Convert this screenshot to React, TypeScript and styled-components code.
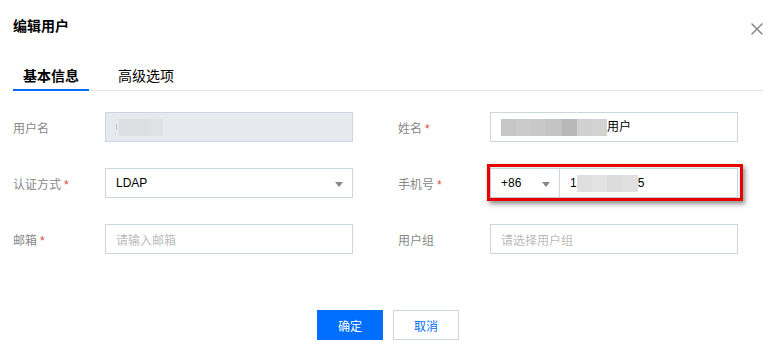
import styled, { createGlobalStyle } from 'styled-components';

const GlobalStyle = createGlobalStyle`
  html, body {
    margin: 0;
    padding: 0;
    background: #fff;
  }
  body {
    font-family: 'Liberation Sans', Arial, 'Noto Sans CJK SC', sans-serif;
    color: #000;
  }
`;

const BLUE = '#006eff';

export default function App() {
  return (
    <>
      <GlobalStyle />
      <Dialog>
        <Header>
          <Title>编辑用户</Title>
          <Close aria-label="关闭">
            <svg width="14" height="14" viewBox="0 0 14 14">
              <path d="M1.5 1.5 L12.5 12.5 M12.5 1.5 L1.5 12.5" stroke="#888" strokeWidth="1.5" />
            </svg>
          </Close>
        </Header>

        <TabBar>
          <Tab active>基本信息</Tab>
          <Tab>高级选项</Tab>
        </TabBar>

        <Form>
          <Field>
            <Label>用户名</Label>
            <Input disabled>
              <Tick />
              <Redacted shades={['#dcdee2', '#dcdee2', '#dfe1e5']} width={44} />
            </Input>
          </Field>
          <Field>
            <Label required>姓名</Label>
            <Input>
              <Redacted
                shades={['#c6c6c6', '#cbcbcb', '#c8c8c8', '#c3c3c3', '#b8b8b8', '#d0d0d0', '#d3d3d3']}
                width={106}
              />
              <Value>用户</Value>
            </Input>
          </Field>

          <Field>
            <Label required>认证方式</Label>
            <Input>
              <Value>LDAP</Value>
              <Caret />
            </Input>
          </Field>
          <Field>
            <Label required>手机号</Label>
            <Marked>
              <Input>
                <Prefix>
                  <Value>+86</Value>
                  <Caret />
                </Prefix>
                <Number>
                  <Value>1</Value>
                  <Redacted shades={['#dedede', '#e3e3e3', '#dcdcdc', '#e0e0e0']} width={61} />
                  <Value>5</Value>
                </Number>
              </Input>
              <Highlight />
            </Marked>
          </Field>

          <Field>
            <Label required>邮箱</Label>
            <Input>
              <Placeholder>请输入邮箱</Placeholder>
            </Input>
          </Field>
          <Field>
            <Label>用户组</Label>
            <Input>
              <Placeholder>请选择用户组</Placeholder>
            </Input>
          </Field>
        </Form>

        <Footer>
          <Button primary>确定</Button>
          <Button>取消</Button>
        </Footer>
      </Dialog>
    </>
  );
}

function Redacted({ shades, width }: { shades: string[]; width: number }) {
  return (
    <Blur style={{ width }}>
      {shades.map((c, i) => (
        <span key={i} style={{ background: c }} />
      ))}
    </Blur>
  );
}

const Dialog = styled.div`
  width: 776px;
  height: 358px;
  box-sizing: border-box;
  padding: 0 13px;
  font-family: 'Liberation Sans', Arial, 'Noto Sans CJK SC', sans-serif;
`;

const Header = styled.div`
  display: flex;
  align-items: center;
  justify-content: space-between;
  padding: 16px 0 20px;
  height: 20px;
`;

const Title = styled.h2`
  margin: 0;
  font-size: 14px;
  line-height: 20px;
  font-weight: 700;
  color: #000;
`;

const Close = styled.button`
  display: flex;
  border: 0;
  padding: 0;
  margin-right: -1px;
  margin-top: 6px;
  background: none;
  cursor: pointer;
`;

const TabBar = styled.div`
  display: flex;
  gap: 19px;
  border-bottom: 1px solid #e5e5e5;
`;

const Tab = styled.div<{ active?: boolean }>`
  padding: 10px 10px 3px;
  font-size: 14px;
  line-height: 20px;
  color: #000;
  font-weight: ${({ active }) => (active ? 700 : 400)};
  border-bottom: 2px solid ${({ active }) => (active ? BLUE : 'transparent')};
  margin-bottom: -1px;
`;

const Form = styled.div`
  display: grid;
  grid-template-columns: 385px 1fr;
  row-gap: 26px;
  margin-top: 21px;
`;

const Field = styled.div`
  display: flex;
  align-items: center;
`;

const Label = styled.label<{ required?: boolean }>`
  width: 92px;
  flex: none;
  font-size: 12px;
  color: #888;
  &::after {
    content: ${({ required }) => (required ? "'*'" : "''")};
    color: #e54545;
    margin-left: 3px;
  }
`;

const Input = styled.div<{ disabled?: boolean }>`
  position: relative;
  display: flex;
  align-items: center;
  width: 248px;
  height: 30px;
  box-sizing: border-box;
  padding: 0 10px;
  border: 1px solid #cfd5de;
  background: ${({ disabled }) => (disabled ? '#e6e9ee' : '#fff')};
  font-size: 12px;
  color: #000;
`;

const Value = styled.span`
  line-height: 18px;
`;

const Tick = styled.span`
  width: 1px;
  height: 6px;
  margin-right: 2px;
  background: #c4c8ce;
`;

const Placeholder = styled.span`
  color: #bbb;
`;

const Blur = styled.span`
  display: flex;
  height: 17px;
  & > span {
    flex: 1;
  }
`;

const Caret = styled.span`
  position: absolute;
  right: 9px;
  top: 13px;
  width: 0;
  height: 0;
  border-left: 4px solid transparent;
  border-right: 4px solid transparent;
  border-top: 5px solid #888;
`;

const Prefix = styled.div`
  position: relative;
  display: flex;
  align-items: center;
  align-self: stretch;
  width: 69px;
  margin-left: -10px;
  padding-left: 10px;
  box-sizing: border-box;
  border-right: 1px solid #cfd5de;
`;

const Number = styled.div`
  display: flex;
  align-items: center;
  padding-left: 10px;
`;

const Marked = styled.div`
  position: relative;
`;

const Highlight = styled.div`
  position: absolute;
  left: -3px;
  top: -4px;
  right: -5px;
  bottom: -3px;
  border: 3px solid #e60000;
  box-shadow: 2px 3px 5px rgba(0, 0, 0, 0.45), inset 0 0 2px rgba(0, 0, 0, 0.25);
  pointer-events: none;
`;

const Footer = styled.div`
  display: flex;
  justify-content: center;
  gap: 10px;
  margin-top: 56px;
`;

const Button = styled.button<{ primary?: boolean }>`
  width: 66px;
  height: 30px;
  box-sizing: border-box;
  font-family: inherit;
  font-size: 12px;
  border: 1px solid ${({ primary }) => (primary ? BLUE : '#cfd5de')};
  background: ${({ primary }) => (primary ? BLUE : '#fff')};
  color: ${({ primary }) => (primary ? '#fff' : BLUE)};
  cursor: pointer;
`;
